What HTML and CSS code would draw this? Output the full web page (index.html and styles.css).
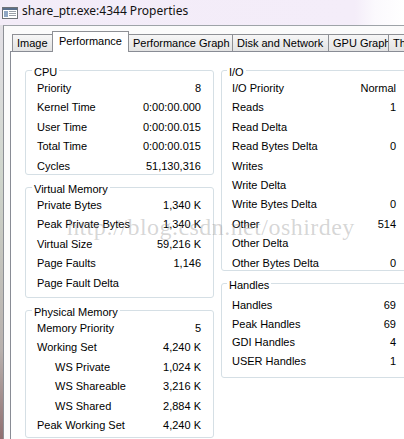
FILE: index.html
```html
<!DOCTYPE html>
<html>
<head>
<meta charset="utf-8">
<title>share_ptr.exe:4344 Properties</title>
<link rel="stylesheet" href="styles.css">
</head>
<body>
<div class="window">
  <div class="titlebar">
    <svg class="app-icon" width="16" height="12" viewBox="0 0 16 12">
      <rect x="0.5" y="0.5" width="15" height="11" fill="#ffffff" stroke="#6f7378"/>
      <rect x="1" y="1" width="14" height="2" fill="#5a6f8c"/>
      <rect x="2" y="4" width="4" height="6" fill="#8fa6c4"/>
      <rect x="7" y="4" width="7" height="1" fill="#9aa0a8"/>
      <rect x="7" y="6" width="7" height="1" fill="#9aa0a8"/>
      <rect x="7" y="8" width="7" height="1" fill="#9aa0a8"/>
    </svg>
    <span class="title">share_ptr.exe:4344 Properties</span>
  </div>
  <div class="client">
    <div class="tabs">
      <div class="tab tab-image">Image</div>
      <div class="tab tab-active">Performance</div>
      <div class="tab tab-perfgraph">Performance Graph</div>
      <div class="tab tab-disk">Disk and Network</div>
      <div class="tab tab-gpu">GPU Graph</div>
      <div class="tab tab-threads">Threads</div>
    </div>
    <div class="panel">
      <div class="col col-left">
        <section class="group group-cpu">
          <div class="group-title">CPU</div>
          <div class="row"><span>Priority</span><span>8</span></div>
          <div class="row"><span>Kernel Time</span><span>0:00:00.000</span></div>
          <div class="row"><span>User Time</span><span>0:00:00.015</span></div>
          <div class="row"><span>Total Time</span><span>0:00:00.015</span></div>
          <div class="row"><span>Cycles</span><span>51,130,316</span></div>
        </section>
        <section class="group group-vm">
          <div class="group-title">Virtual Memory</div>
          <div class="row"><span>Private Bytes</span><span>1,340 K</span></div>
          <div class="row"><span>Peak Private Bytes</span><span>1,340 K</span></div>
          <div class="row"><span>Virtual Size</span><span>59,216 K</span></div>
          <div class="row"><span>Page Faults</span><span>1,146</span></div>
          <div class="row"><span>Page Fault Delta</span><span></span></div>
        </section>
        <section class="group group-pm">
          <div class="group-title">Physical Memory</div>
          <div class="row"><span>Memory Priority</span><span>5</span></div>
          <div class="row"><span>Working Set</span><span>4,240 K</span></div>
          <div class="row indent"><span>WS Private</span><span>1,024 K</span></div>
          <div class="row indent"><span>WS Shareable</span><span>3,216 K</span></div>
          <div class="row indent"><span>WS Shared</span><span>2,884 K</span></div>
          <div class="row"><span>Peak Working Set</span><span>4,240 K</span></div>
        </section>
      </div>
      <div class="col col-right">
        <section class="group group-right group-io">
          <div class="group-title">I/O</div>
          <div class="row"><span>I/O Priority</span><span>Normal</span></div>
          <div class="row"><span>Reads</span><span>1</span></div>
          <div class="row"><span>Read Delta</span><span></span></div>
          <div class="row"><span>Read Bytes Delta</span><span>0</span></div>
          <div class="row"><span>Writes</span><span></span></div>
          <div class="row"><span>Write Delta</span><span></span></div>
          <div class="row"><span>Write Bytes Delta</span><span>0</span></div>
          <div class="row"><span>Other</span><span>514</span></div>
          <div class="row"><span>Other Delta</span><span></span></div>
          <div class="row"><span>Other Bytes Delta</span><span>0</span></div>
        </section>
        <section class="group group-right group-handles">
          <div class="group-title">Handles</div>
          <div class="rows-compact">
            <div class="row"><span>Handles</span><span>69</span></div>
            <div class="row"><span>Peak Handles</span><span>69</span></div>
            <div class="row"><span>GDI Handles</span><span>4</span></div>
            <div class="row"><span>USER Handles</span><span>1</span></div>
          </div>
        </section>
      </div>
    </div>
  </div>
</div>
<div class="watermark">http://blog.csdn.net/oshirdey</div>
</body>
</html>
```
FILE: styles.css
```css
html, body {
  margin: 0;
  padding: 0;
}

body {
  position: relative;
  width: 404px;
  height: 439px;
  overflow: hidden;
  font-family: "Liberation Sans", Arial, sans-serif;
  font-size: 11px;
  color: #000;
  background: linear-gradient(180deg, #e6e2ea 0, #cfd5cc 40%, #b7b0ad 80%, #8f6f70 100%);
}

.window {
  display: flex;
  flex-direction: column;
  height: 439px;
}

.titlebar {
  flex: none;
  height: 25px;
  box-sizing: border-box;
  display: flex;
  align-items: flex-start;
  gap: 4px;
  padding: 3px 0 0 2px;
  background: linear-gradient(90deg, #f3ecf8 0, #f4edf9 355px, #fbf9fd 375px, #ffffff 404px);
}

.app-icon {
  flex: none;
  margin-top: 4px;
}

.title {
  font-family: "Noto Sans", "Liberation Sans", sans-serif;
  font-size: 12px;
  line-height: 16px;
  color: #111;
  white-space: nowrap;
}

.client {
  flex: 1;
  min-height: 0;
  overflow: hidden;
  margin-left: 3px;
  border-top: 1px solid #9ea3a8;
  border-left: 1px solid #8d9096;
  background: #fbfbfb;
  display: flex;
  flex-direction: column;
}

.tabs {
  flex: none;
  height: 25px;
  display: flex;
  align-items: flex-end;
  padding-left: 8px;
  white-space: nowrap;
}

.tab {
  flex: none;
  box-sizing: border-box;
  height: 17px;
  margin-left: -1px;
  padding: 1px 0 0 4px;
  line-height: 14px;
  border: 1px solid #8e9095;
  border-bottom: none;
  background: linear-gradient(180deg, #f7f7f7 0, #ececec 50%, #e3e3e3 100%);
  overflow: hidden;
}

.tab-image { width: 41px; margin-left: 0; }
.tab-perfgraph { width: 105px; }
.tab-disk { width: 97px; }
.tab-gpu { width: 61px; }
.tab-threads { width: 40px; }

.tab-active {
  position: relative;
  z-index: 1;
  width: 77px;
  height: 21px;
  margin-bottom: -1px;
  padding: 2px 0 0 6px;
  background: #ffffff;
}

.panel {
  flex: none;
  box-sizing: border-box;
  width: 420px;
  height: 400px;
  margin-left: 6px;
  border: 1px solid #898c95;
  background: #ffffff;
  display: flex;
  gap: 7px;
  padding: 18px 0 0 14px;
}

.col {
  display: flex;
  flex-direction: column;
  gap: 12px;
}

.col-left { width: 189px; }
.col-right { width: 188px; }

.group {
  flex: none;
  box-sizing: border-box;
  display: flex;
  flex-direction: column;
  border: 1px solid #d5dfe5;
  border-radius: 3px;
  padding: 0 12px 0 11px;
}

.group-right {
  padding-left: 10px;
}

.group-cpu { height: 105px; }
.group-vm { height: 111px; }
.group-pm { height: 128px; }
.group-io { height: 201px; }
.group-handles { height: 95px; }

.group-title {
  align-self: flex-start;
  margin: -6px 0 0 -5px;
  padding: 0 2px;
  line-height: 14px;
  background: #ffffff;
}

.row {
  display: flex;
  justify-content: space-between;
  height: 19.4px;
  line-height: 19.4px;
  white-space: nowrap;
}

.indent {
  padding-left: 18px;
}

.rows-compact {
  padding-top: 4px;
}

.rows-compact .row {
  height: 18.7px;
  line-height: 18.7px;
}

.watermark {
  position: absolute;
  left: 67px;
  top: 215px;
  font-family: "Liberation Serif", "Times New Roman", serif;
  font-size: 24px;
  line-height: 24px;
  letter-spacing: 0.45px;
  color: rgba(130, 130, 130, 0.32);
  white-space: nowrap;
  pointer-events: none;
}
```
